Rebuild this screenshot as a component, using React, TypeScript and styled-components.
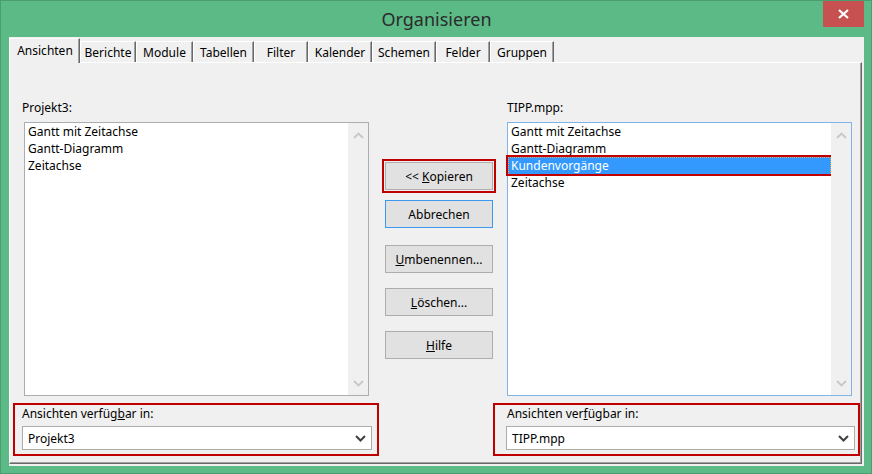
import React from 'react';
import styled, { createGlobalStyle } from 'styled-components';

const FONT = '"Noto Sans", "Open Sans", "DejaVu Sans", sans-serif';

const GlobalStyle = createGlobalStyle`
  html, body { margin: 0; padding: 0; background: #ffffff; }
  body { font-family: ${FONT}; -webkit-font-smoothing: antialiased; }
  * { box-sizing: border-box; }
`;

const Window = styled.div`
  width: 872px;
  height: 474px;
  background: #5bba86;
  border: 1px solid #4a9d6f;
  padding: 0 7px 7px 8px;
  display: flex;
  flex-direction: column;
`;

const TitleBar = styled.div`
  height: 36px;
  display: grid;
  grid-template-columns: 1fr auto 1fr;
  align-items: start;
`;

const Title = styled.div`
  grid-column: 2;
  font-size: 18px;
  line-height: 37px;
  color: #2b2b2b;
`;

const CloseButton = styled.div`
  grid-column: 3;
  justify-self: end;
  width: 41px;
  height: 26px;
  background: #c75050;
  display: flex;
  align-items: center;
  justify-content: center;
`;

const Client = styled.div`
  flex: 1;
  background: #f0f0f0;
  display: flex;
  flex-direction: column;
  padding: 1px 2px 2px 0;
`;

const TabRow = styled.div`
  display: flex;
  align-items: flex-end;
  height: 24px;
`;

const Tab = styled.div<{ $w: number; $active?: boolean }>`
  width: ${(p) => p.$w}px;
  height: ${(p) => (p.$active ? 25 : 21)}px;
  margin-bottom: ${(p) => (p.$active ? -1 : 0)}px;
  position: relative;
  z-index: ${(p) => (p.$active ? 2 : 1)};
  background: #f0f0f0;
  border-top: 1px solid #ffffff;
  border-left: 1px solid #ffffff;
  border-right: 1px solid #696969;
  box-shadow: inset -1px 0 0 #a0a0a0;
  display: flex;
  align-items: center;
  justify-content: center;
  padding-bottom: ${(p) => (p.$active ? 2 : 0)}px;
  padding-left: ${(p) => (p.$active ? 1 : 0)}px;
  font-size: 12px;
  color: #000;
  white-space: nowrap;
`;

const Panel = styled.div`
  flex: 1;
  border-top: 1px solid #ffffff;
  border-left: 1px solid #ffffff;
  border-right: 1px solid #696969;
  border-bottom: 1px solid #696969;
  box-shadow: inset -1px -1px 0 #a0a0a0;
  display: grid;
  grid-template-columns: 366px 114px 367px;
  padding-left: 3px;
`;

const Column = styled.div`
  display: flex;
  flex-direction: column;
  padding-top: 37px;
`;

const Label = styled.div<{ $pl: number }>`
  font-size: 12px;
  line-height: 16px;
  height: 16px;
  color: #000;
  padding-left: ${(p) => p.$pl}px;
  white-space: nowrap;
`;

const ListBox = styled.div<{ $ml: number; $focused?: boolean }>`
  margin-top: 6px;
  margin-left: ${(p) => p.$ml}px;
  width: 345px;
  height: 274px;
  background: #ffffff;
  border: 1px solid ${(p) => (p.$focused ? '#7eb4ea' : '#abadb3')};
  display: flex;
`;

const Items = styled.div`
  flex: 1;
  display: flex;
  flex-direction: column;
`;

const Item = styled.div<{ $selected?: boolean }>`
  font-size: 12px;
  line-height: 16px;
  height: 17px;
  padding-left: 2px;
  white-space: nowrap;
  border: 1px ${(p) => (p.$selected ? 'dotted #e9a558' : 'solid transparent')};
  border-bottom-width: 0;
  background: ${(p) => (p.$selected ? '#3399ff' : 'transparent')};
  color: ${(p) => (p.$selected ? '#ffffff' : '#000000')};
  outline: ${(p) => (p.$selected ? '2px solid #c00000' : 'none')};
`;

const ScrollTrack = styled.div`
  width: 20px;
  background: #f0f0f0;
  display: flex;
  flex-direction: column;
  justify-content: space-between;
  align-items: center;
  padding: 9px 0 8px;
`;

const ButtonColumn = styled.div`
  display: flex;
  flex-direction: column;
  padding-top: 99px;
  padding-left: 6px;
`;

const Button = styled.div<{ $gap: number; $default?: boolean; $marked?: boolean }>`
  margin-top: ${(p) => p.$gap}px;
  width: 108px;
  height: 28px;
  border: 1px solid ${(p) => (p.$default ? '#3c98f0' : '#adadad')};
  background: #e1e1e1;
  display: flex;
  align-items: center;
  justify-content: center;
  font-size: 12px;
  color: #000;
  white-space: nowrap;
  outline: ${(p) => (p.$marked ? '2px solid #c00000' : 'none')};
  outline-offset: 1px;
`;

const GroupBox = styled.div`
  margin-top: 7px;
  height: 53px;
  border: 2px solid #c00000;
  display: flex;
  flex-direction: column;
  padding-top: 1px;
`;

const Combo = styled.div<{ $ml: number; $mr: number }>`
  margin: 4px ${(p) => p.$mr}px 0 ${(p) => p.$ml}px;
  height: 24px;
  background: #ffffff;
  border: 1px solid #acacac;
  display: flex;
  align-items: center;
  justify-content: space-between;
  padding: 0 5px 0 5px;
  font-size: 12px;
  color: #000;
`;

const Chevron = ({ up, color, w = 2 }: { up?: boolean; color: string; w?: number }) => (
  <svg width="11" height="7" viewBox="0 0 11 7">
    <polyline
      points={up ? '1,6 5.5,1.5 10,6' : '1,1 5.5,5.5 10,1'}
      fill="none"
      stroke={color}
      strokeWidth={w}
    />
  </svg>
);

const tabs: { label: string; w: number }[] = [
  { label: 'Ansichten', w: 71 },
  { label: 'Berichte', w: 56 },
  { label: 'Module', w: 57 },
  { label: 'Tabellen', w: 61 },
  { label: 'Filter', w: 54 },
  { label: 'Kalender', w: 64 },
  { label: 'Schemen', w: 64 },
  { label: 'Felder', w: 54 },
  { label: 'Gruppen', w: 64 },
];

export default function App() {
  return (
    <>
      <GlobalStyle />
      <Window>
        <TitleBar>
          <Title>Organisieren</Title>
          <CloseButton>
            <svg width="11" height="10" viewBox="0 0 11 10">
              <path d="M1 1 L10 9 M10 1 L1 9" stroke="#ffffff" strokeWidth="2.2" />
            </svg>
          </CloseButton>
        </TitleBar>
        <Client>
          <TabRow>
            {tabs.map((t, i) => (
              <Tab key={t.label} $w={t.w} $active={i === 0}>
                {t.label}
              </Tab>
            ))}
          </TabRow>
          <Panel>
            <Column>
              <Label $pl={9}>Projekt3:</Label>
              <ListBox $ml={11}>
                <Items>
                  <Item>Gantt mit Zeitachse</Item>
                  <Item>Gantt-Diagramm</Item>
                  <Item>Zeitachse</Item>
                </Items>
                <ScrollTrack>
                  <Chevron up color="#c8c8c8" w={1.8} />
                  <Chevron color="#c8c8c8" w={1.8} />
                </ScrollTrack>
              </ListBox>
              <GroupBox>
                <Label $pl={7}>
                  Ansichten verfüg<u>b</u>ar in:
                </Label>
                <Combo $ml={7} $mr={5}>
                  <span>Projekt3</span>
                  <Chevron color="#404040" />
                </Combo>
              </GroupBox>
            </Column>
            <ButtonColumn>
              <Button $gap={0} $marked>
                &lt;&lt;&nbsp;<u>K</u>opieren
              </Button>
              <Button $gap={10} $default>
                Abbrechen
              </Button>
              <Button $gap={17}>
                <u>U</u>mbenennen...
              </Button>
              <Button $gap={15}>
                <u>L</u>öschen...
              </Button>
              <Button $gap={15}>
                <u>H</u>ilfe
              </Button>
            </ButtonColumn>
            <Column>
              <Label $pl={14}>TIPP.mpp:</Label>
              <ListBox $ml={14} $focused>
                <Items>
                  <Item>Gantt mit Zeitachse</Item>
                  <Item>Gantt-Diagramm</Item>
                  <Item $selected>Kundenvorgänge</Item>
                  <Item>Zeitachse</Item>
                </Items>
                <ScrollTrack>
                  <Chevron up color="#c8c8c8" w={1.8} />
                  <Chevron color="#c8c8c8" w={1.8} />
                </ScrollTrack>
              </ListBox>
              <GroupBox>
                <Label $pl={12}>
                  Ansichten ver<u>f</u>ügbar in:
                </Label>
                <Combo $ml={11} $mr={3}>
                  <span>TIPP.mpp</span>
                  <Chevron color="#404040" />
                </Combo>
              </GroupBox>
            </Column>
          </Panel>
        </Client>
      </Window>
    </>
  );
}
